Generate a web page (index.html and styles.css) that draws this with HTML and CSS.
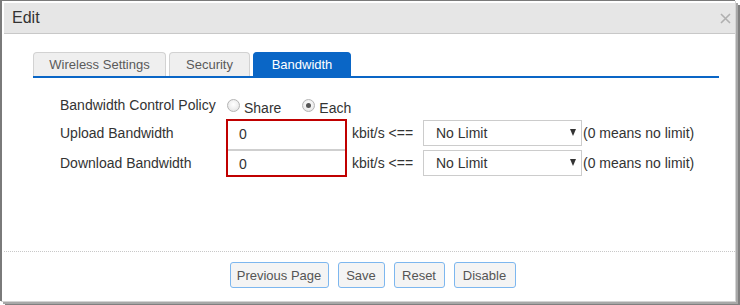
FILE: index.html
```html
<!DOCTYPE html>
<html>
<head>
<meta charset="utf-8">
<link rel="stylesheet" href="styles.css">
</head>
<body>
<div class="dialog">
  <div class="header">
    <span class="title">Edit</span>
    <svg class="close" width="11" height="11" viewBox="0 0 11 11"><path d="M1 1 L10 10 M10 1 L1 10" stroke="#b0b0b0" stroke-width="1.6" fill="none"/></svg>
  </div>
  <div class="content">
    <div class="tabs">
      <div class="tab t1">Wireless Settings</div>
      <div class="tab t2">Security</div>
      <div class="tab t3 active">Bandwidth</div>
    </div>
    <div class="form">
      <div class="label r1">Bandwidth Control Policy</div>
      <div class="radios r1">
        <label class="opt"><span class="radio"></span><span class="rtext">Share</span></label>
        <label class="opt"><span class="radio checked"></span><span class="rtext">Each</span></label>
      </div>

      <div class="label r2">Upload Bandwidth</div>
      <div class="field f1 r2">0</div>
      <div class="unit r2">kbit/s &lt;==</div>
      <div class="select r2"><span>No Limit</span><span class="arrow"></span></div>
      <div class="note r2">(0 means no limit)</div>

      <div class="label r3">Download Bandwidth</div>
      <div class="field f2 r3">0</div>
      <div class="unit r3">kbit/s &lt;==</div>
      <div class="select r3"><span>No Limit</span><span class="arrow"></span></div>
      <div class="note r3">(0 means no limit)</div>

      <div class="highlight"></div>
    </div>
  </div>
  <div class="footer">
    <button class="btn w1">Previous Page</button>
    <button class="btn w2">Save</button>
    <button class="btn w3">Reset</button>
    <button class="btn w4">Disable</button>
  </div>
</div>
</body>
</html>
```
FILE: styles.css
```css
html, body {
  margin: 0;
  padding: 0;
}
body {
  width: 740px;
  height: 305px;
  overflow: hidden;
  background: #ffffff;
  font-family: "Liberation Sans", Arial, sans-serif;
  color: #333;
}
.dialog {
  width: 735px;
  height: 301px;
  box-sizing: border-box;
  border-left: 2px solid #7a7a7a;
  border-top: 1px solid #7a7a7a;
  padding: 2px 0 0 2px;
  display: flex;
  flex-direction: column;
  background: #fff;
  box-shadow: 1px 1px 0 #d4d4d4, 3px 3px 0 #a8a8a8, 5px 5px 0 #808080;
}
.header {
  height: 30px;
  border-bottom: 1px solid #c8c8c8;
  background: #e6e6e6;
  display: flex;
  align-items: center;
  justify-content: space-between;
  padding: 0 4px 0 8px;
  flex-shrink: 0;
}
.title {
  font-size: 16px;
  color: #333;
}
.close {
  display: block;
  margin-right: 0;
}
.content {
  padding: 18px 0 0 29px;
}
.tabs {
  display: flex;
  width: 686px;
  height: 24px;
  border-bottom: 2px solid #0a66c6;
  gap: 3px;
}
.tab {
  box-sizing: border-box;
  height: 24px;
  border: 1px solid #d2d2d2;
  border-bottom: none;
  border-radius: 4px 4px 0 0;
  background: #efefef;
  color: #5a5a5a;
  font-size: 13px;
  display: flex;
  align-items: center;
  justify-content: center;
}
.t1 { width: 133px; }
.t2 { width: 81px; }
.t3 { width: 98px; }
.tab.active {
  background: #0a66c6;
  border-color: #0a66c6;
  color: #fff;
}
.form {
  margin: 14px 0 0 27px;
  display: grid;
  grid-template-columns: 167px 120px 76px 160px auto;
  grid-template-rows: 27px 30px 27px;
  font-size: 14px;
  color: #333;
}
.r1 { grid-row: 1; }
.r2 { grid-row: 2; }
.r3 { grid-row: 3; }
.label {
  grid-column: 1;
  line-height: 26px;
}
.label.r1 { line-height: 26px; }
.label.r2, .label.r3 { margin-top: 1px; }
.radios {
  grid-column: 2 / 5;
  display: flex;
  align-items: center;
  gap: 21px;
  height: 27px;
}
.opt {
  display: flex;
  align-items: center;
}
.radio {
  box-sizing: border-box;
  width: 13px;
  height: 13px;
  border-radius: 50%;
  border: 1px solid #b4b4b4;
  background: radial-gradient(circle at 50% 40%, #ffffff 0%, #f0f0f0 50%, #dcdcdc 100%);
  margin-right: 4px;
  position: relative;
}
.radio.checked::after {
  content: "";
  position: absolute;
  left: 3px;
  top: 3px;
  width: 5px;
  height: 5px;
  border-radius: 50%;
  background: #555;
}
.rtext {
  margin-top: 4px;
}
.field {
  grid-column: 2;
  box-sizing: border-box;
  margin-top: 1px;
  width: 120px;
  border: 1px solid #cfcfcf;
  padding-left: 11px;
  display: flex;
  align-items: center;
  background: #fff;
}
.f1 { height: 30px; padding-bottom: 3px; }
.f2 { height: 27px; margin-top: 1px; }
.unit {
  grid-column: 3;
  margin-top: 1px;
  line-height: 26px;
  padding-left: 5px;
}
.select {
  grid-column: 4;
  box-sizing: border-box;
  margin-top: 1px;
  width: 159px;
  height: 26px;
  border: 1px solid #cccccc;
  background: #fff;
  display: flex;
  align-items: center;
  justify-content: space-between;
  padding: 0 5px 0 12px;
}
.arrow {
  width: 0;
  height: 0;
  border-left: 3.5px solid transparent;
  border-right: 3.5px solid transparent;
  border-top: 7px solid #333;
  margin-top: -2px;
}
.note {
  grid-column: 5;
  margin-top: 1px;
  line-height: 26px;
}
.highlight {
  grid-column: 2;
  grid-row: 2 / 4;
  box-sizing: border-box;
  width: 121px;
  height: 58px;
  border: 2px solid #c00000;
  margin-left: -1px;
}
.footer {
  margin-top: auto;
  border-top: 1px dotted #c8c8c8;
  padding: 10px 0 13px 6px;
  display: flex;
  justify-content: center;
  gap: 9px;
}
.btn {
  box-sizing: border-box;
  height: 26px;
  border: 1px solid #7db7ef;
  border-radius: 3px;
  background: #f4f4f4;
  color: #555;
  font-family: "Liberation Sans", Arial, sans-serif;
  font-size: 13px;
  padding: 0;
}
.w1 { width: 99px; }
.w2 { width: 47px; }
.w3 { width: 51px; }
.w4 { width: 62px; }
```
